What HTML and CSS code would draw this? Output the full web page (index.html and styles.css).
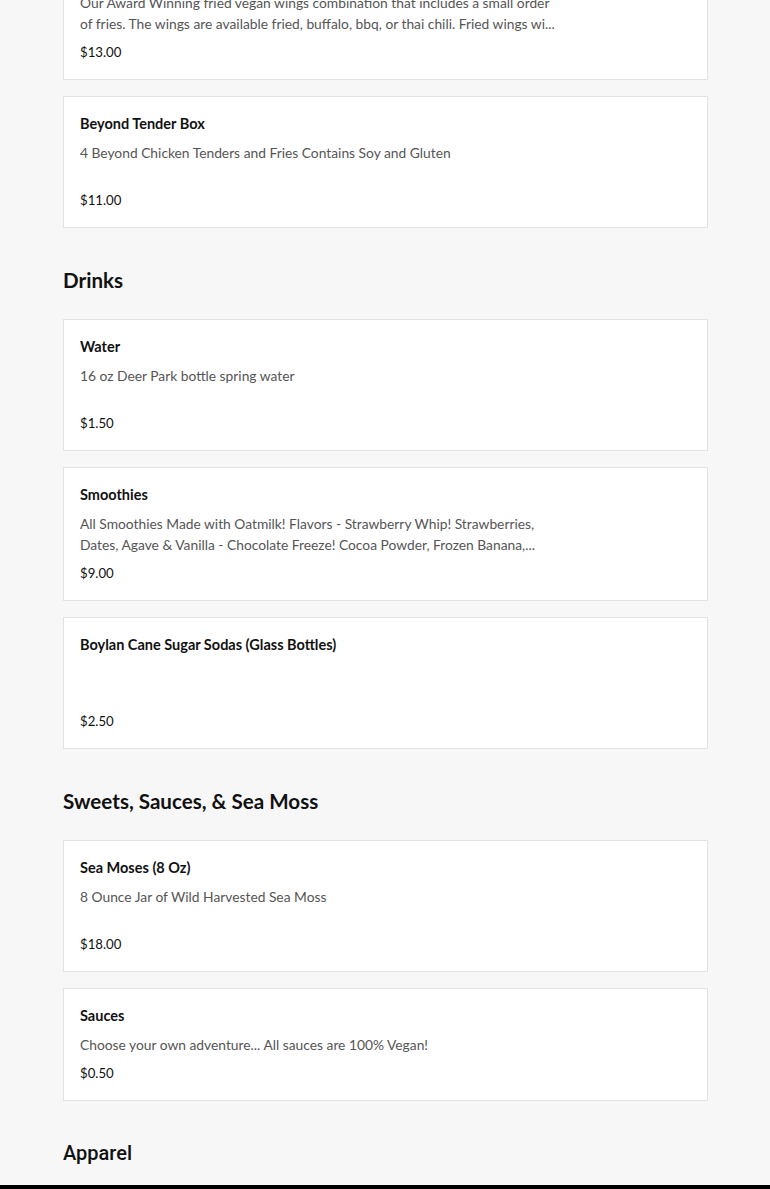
FILE: index.html
```html
<!DOCTYPE html>
<html lang="en">
<head>
<meta charset="utf-8">
<title>Menu</title>
<link rel="stylesheet" href="styles.css">
</head>
<body>
<main class="menu">
  <section class="section section--first">
    <div class="items">
      <article class="item">
        <h3 class="item-name">Wing Combo</h3>
        <p class="item-desc">Our Award Winning fried vegan wings combination that includes a small order of fries. The wings are available fried, buffalo, bbq, or thai chili. Fried wings wi...</p>
        <p class="item-price">$13.00</p>
      </article>
      <article class="item">
        <h3 class="item-name">Beyond Tender Box</h3>
        <p class="item-desc">4 Beyond Chicken Tenders and Fries Contains Soy and Gluten</p>
        <p class="item-price">$11.00</p>
      </article>
    </div>
  </section>

  <section class="section">
    <h2 class="section-title">Drinks</h2>
    <div class="items">
      <article class="item">
        <h3 class="item-name">Water</h3>
        <p class="item-desc">16 oz Deer Park bottle spring water</p>
        <p class="item-price">$1.50</p>
      </article>
      <article class="item">
        <h3 class="item-name">Smoothies</h3>
        <p class="item-desc">All Smoothies Made with Oatmilk! Flavors - Strawberry Whip! Strawberries, Dates, Agave &amp; Vanilla - Chocolate Freeze! Cocoa Powder, Frozen Banana,...</p>
        <p class="item-price">$9.00</p>
      </article>
      <article class="item">
        <h3 class="item-name">Boylan Cane Sugar Sodas (Glass Bottles)</h3>
        <p class="item-desc"></p>
        <p class="item-price">$2.50</p>
      </article>
    </div>
  </section>

  <section class="section">
    <h2 class="section-title">Sweets, Sauces, &amp; Sea Moss</h2>
    <div class="items">
      <article class="item">
        <h3 class="item-name">Sea Moses (8 Oz)</h3>
        <p class="item-desc">8 Ounce Jar of Wild Harvested Sea Moss</p>
        <p class="item-price">$18.00</p>
      </article>
      <article class="item">
        <h3 class="item-name">Sauces</h3>
        <p class="item-desc item-desc--short">Choose your own adventure... All sauces are 100% Vegan!</p>
        <p class="item-price">$0.50</p>
      </article>
    </div>
  </section>

  <section class="section section--last">
    <h2 class="section-title section-title--alt">Apparel</h2>
  </section>
</main>
<footer class="footer"></footer>
</body>
</html>
```
FILE: styles.css
```css
* { box-sizing: border-box; }

html, body {
  margin: 0;
  padding: 0;
}

body {
  background: #f7f7f7;
  font-family: "Lato", "Liberation Sans", sans-serif;
  color: #111;
}

.menu {
  width: 645px;
  margin-left: 63px;
  margin-top: -54px;
}

.section-title {
  margin: 39px 0 26px;
  font-size: 20.6px;
  line-height: 26px;
  font-weight: 700;
  color: #111;
}

.section-title--alt {
  font-family: "Roboto", sans-serif;
  font-weight: 500;
  font-size: 20px;
  margin-bottom: 0;
}

.section--last {
  padding-bottom: 19px;
}

.items {
  display: flex;
  flex-direction: column;
  gap: 16px;
}

.item {
  background: #fff;
  border: 1px solid #e2e2e2;
  padding: 16px 16px 17px;
}

.item-name {
  margin: 0 0 8px;
  font-size: 14.5px;
  line-height: 21px;
  font-weight: 700;
  color: #111;
}

.item-desc {
  margin: 0;
  max-width: 480px;
  min-height: 40px;
  font-size: 13.8px;
  line-height: 21px;
  color: #555;
}

.item-desc--short {
  min-height: 0;
}

.item-price {
  margin: 8px 0 0;
  font-size: 13.2px;
  line-height: 20px;
  color: #111;
}

.footer {
  background: #000;
  height: 200px;
}
```
